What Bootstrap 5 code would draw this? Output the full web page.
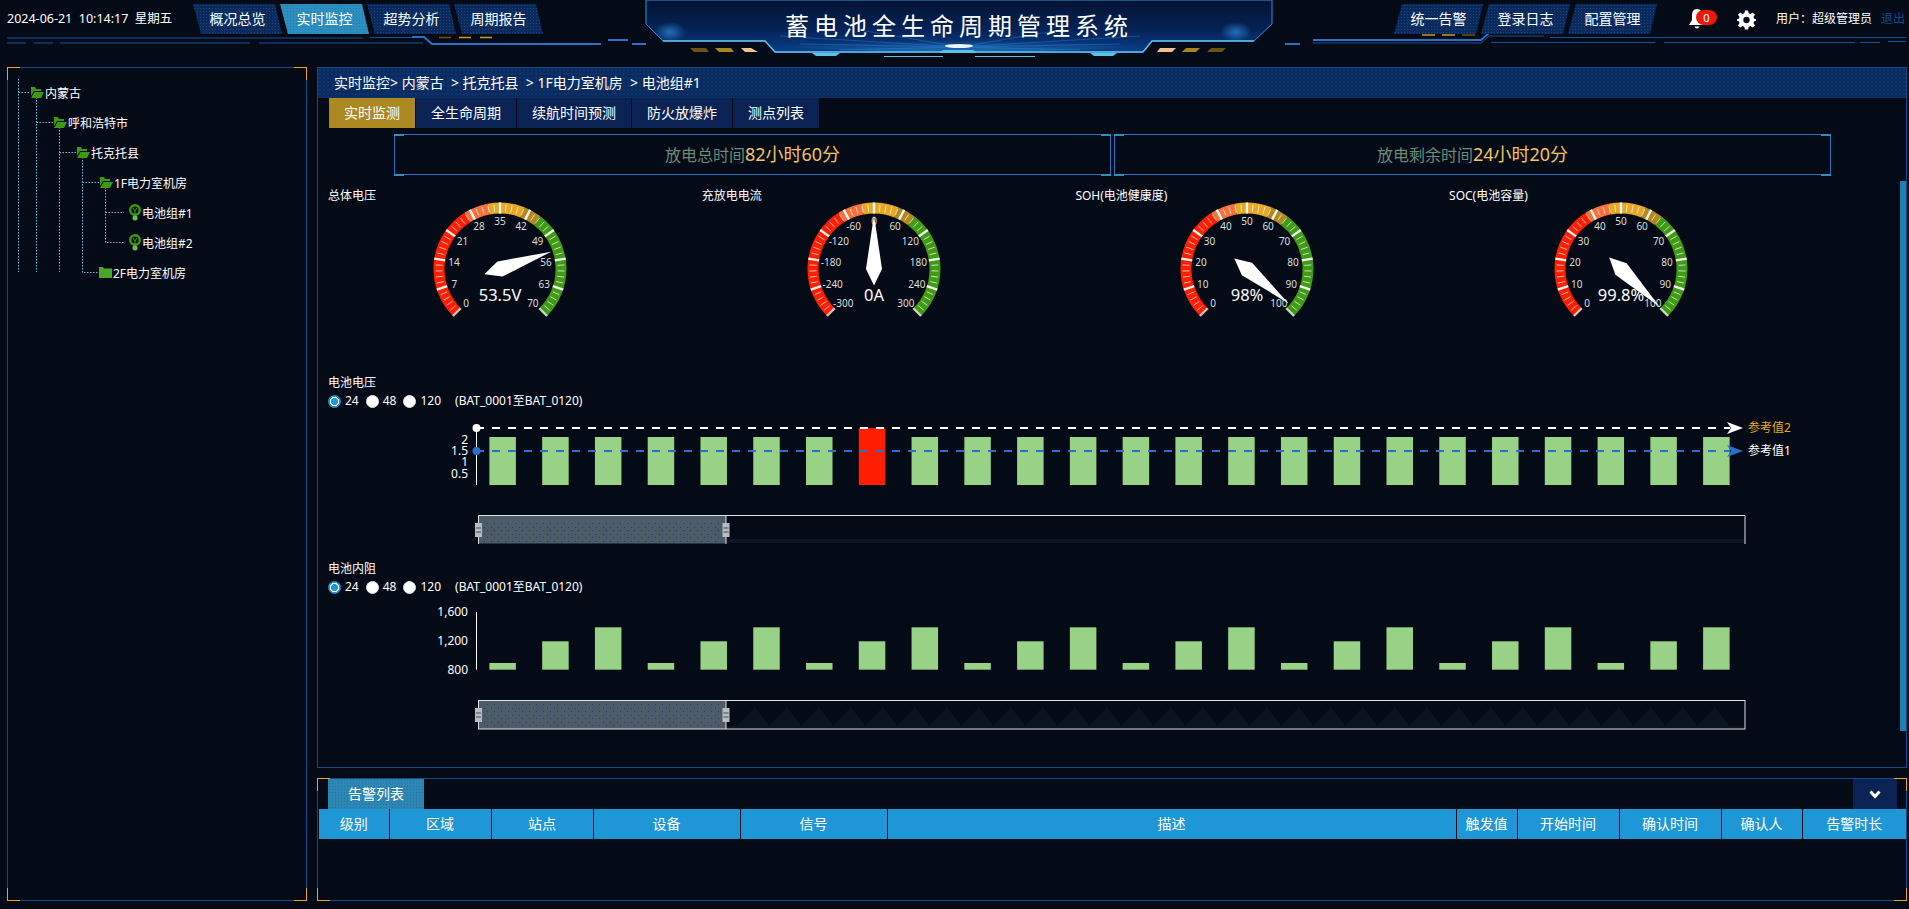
<!DOCTYPE html>
<html lang="zh-CN">
<head>
<meta charset="utf-8">
<title>蓄电池全生命周期管理系统</title>
<link rel="stylesheet" href="https://cdn.jsdelivr.net/npm/bootstrap@5.3.0/dist/css/bootstrap.min.css">
<style>
html,body{height:100%;overflow:hidden}
body{background:#040b16;color:#fff;font-family:"Noto Sans","Noto Sans CJK SC",sans-serif;font-size:12px;line-height:18px}
svg{display:block;overflow:visible}
.hdr{height:67px;position:relative}
.hdr-deco{position:absolute;left:0;top:0;z-index:0}
.hdr-left{flex:0 0 646px;padding:4px 0 0 7px;position:relative;z-index:1;align-items:flex-start}
.hdr-mid{flex:0 0 626px;position:relative;height:67px;z-index:1}
.hdr-right{flex:1 1 auto;position:relative;z-index:1;padding:4px 0 0 122px;align-items:flex-start}
.hdr-date{flex:0 0 186px;font-size:12.5px;line-height:30px;white-space:pre}
.title-art{position:absolute;left:0;top:0}
.title-txt{position:relative;text-align:center;font-size:24px;letter-spacing:5px;line-height:52px;height:52px;font-weight:400;margin:0}
.hdr-tab.nav-link{width:89px;height:30px;padding:0;line-height:30px;text-align:center;background:#0a2a5c radial-gradient(#1a4580 .6px,transparent .8px) 0 0/3px 3px;color:#fff;font-size:14px;margin-right:-2px}
.tab-l.nav-link{clip-path:polygon(0 0,calc(100% - 7px) 0,100% 100%,8px 100%)}
.tab-r.nav-link{clip-path:polygon(8px 0,100% 0,calc(100% - 7px) 100%,0 100%)}
.hdr-tab.nav-link.act{background:#2d8fbf radial-gradient(#247aa8 .6px,transparent .8px) 0 0/3px 3px}
.bell-wrap{position:relative;margin-left:33px;width:29px;height:30px}
.bell-ic{margin-top:2px}
.bell-count{position:absolute;left:8px;top:6px;width:21px;height:15px;border-radius:8px;background:#e8190f;text-align:center;font-size:11px;line-height:15px}
.gear-wrap{margin-left:20px;height:30px;padding-top:6px}
.user-txt{margin-left:20px;line-height:30px;font-size:12px;white-space:nowrap}
.logout{color:#0e4c86;margin-left:9px}
.body-row{height:834px;padding-left:7px;gap:10px}
.frame{position:relative;border:1px solid #0e4c86}
.frame::after{content:"";position:absolute;inset:-1px;pointer-events:none;background:
 linear-gradient(#e8a825,#e8a825) 0 0/13px 1px no-repeat,linear-gradient(#e8a825,#e8a825) 0 0/1px 13px no-repeat,
 linear-gradient(#e8a825,#e8a825) 100% 0/13px 1px no-repeat,linear-gradient(#e8a825,#e8a825) 100% 0/1px 13px no-repeat,
 linear-gradient(#e8a825,#e8a825) 0 100%/13px 1px no-repeat,linear-gradient(#e8a825,#e8a825) 0 100%/1px 13px no-repeat,
 linear-gradient(#e8a825,#e8a825) 100% 100%/13px 1px no-repeat,linear-gradient(#e8a825,#e8a825) 100% 100%/1px 13px no-repeat}
.side{flex:0 0 300px;padding-top:11px}
.tree-lines{position:absolute;left:0;top:0}
.tree-row{height:30px;display:flex;align-items:center;position:relative}
.t0{padding-left:22px}.t1{padding-left:45px}.t2{padding-left:68px}.t3{padding-left:91px}.t4{padding-left:121px}
.tree-ic{margin-bottom:4px;margin-right:1px;flex:none}
.right-col{flex:0 0 1590px;gap:10px}
.main-pane{height:701px;overflow:hidden}
.crumb{height:30px;background:#0a2b5f radial-gradient(#154080 .6px,transparent .8px) 0 0/4px 4px;padding-left:16px;line-height:29px;font-size:14px;white-space:pre}
.sub-tabs{padding-left:11px;gap:1px}
.sub-tab.nav-link{height:30px;padding:0;line-height:30px;text-align:center;background:#0a2354;color:#fff;font-size:14px}
.sub-tab.on.nav-link{background:#ab8820}
.w86{width:86px}.w100{width:100px}.w114{width:114px}.w99{width:100px}
.time-row{padding:6px 0 0 76px;gap:3px}
.time-box{position:relative;width:717px;height:41px;border:1px solid #2a6fb8;text-align:center;line-height:38px;font-size:16px;color:#6b8a78}
.time-box::after{content:"";position:absolute;inset:-2px -1px;pointer-events:none;background:
 linear-gradient(#2a8fbf,#2a8fbf) 0 1px/10px 2px no-repeat,linear-gradient(#2a8fbf,#2a8fbf) 0 100%/10px 2px no-repeat,
 linear-gradient(#2a8fbf,#2a8fbf) 100% 1px/10px 2px no-repeat,linear-gradient(#2a8fbf,#2a8fbf) 100% 100%/10px 2px no-repeat}
.time-val{font-size:18px;color:#f3c364}
.gauge-row{padding:12px 0 0 10px}
.gauge-cell{flex:0 0 373.7px}
.sec{padding-left:10px}
.sec-a{margin-top:54px}
.sec-b{margin-top:10px}
.radio-row{height:18px;padding-left:10px;white-space:pre}
.form-check-input.rd{width:13px;height:13px;margin:0 4px 0 0;border:1px solid #dfe7e4;background:#fff;flex:none}
.form-check-input.rd:checked{background:radial-gradient(circle,#1f96d6 0 3.5px,#fff 3.7px 4.6px,#1f96d6 4.8px);border-color:#1f96d6}
.rd-gap{margin-right:7px}
.bat-range{margin-left:14px}
.scroll-thumb{position:absolute;right:0;top:113px;width:6px;height:550px;background:#1f7fae}
.alarm-pane{height:123px}
.alarm-top{height:30px;padding-left:10px;padding-right:9px}
.alarm-tab{width:96px;height:30px;line-height:30px;text-align:center;font-size:14px;background:#2e86b5 radial-gradient(#27749f .6px,transparent .8px) 0 0/3px 3px}
.collapse-btn{width:44px;height:30px;padding:0;border:0;border-radius:0;background:#0a2354;display:flex;align-items:center;justify-content:center}
.alarm-table{table-layout:fixed;width:1587px;margin:0 0 0 1px;--bs-table-bg:transparent;--bs-table-color:#fff;font-size:14px}
.alarm-table th{height:30px;padding:0;background:#1f96d6;color:#fff;font-weight:400;text-align:center;vertical-align:middle;border:0;border-right:1px solid #040b16;line-height:30px;white-space:nowrap}
.alarm-table th:last-child{border-right:0}
.c70{width:70px}.c102{width:102px}.c147{width:147px}.c569{width:569px}.c61{width:61px}.c81{width:81px}.c104{width:104px}
</style>
</head>
<body>
<header class="hdr d-flex">
  <svg class="hdr-deco" width="1909" height="67" viewBox="0 0 1909 67" fill="none">
    <g stroke="#12509a" stroke-width="1">
      <path d="M7 38H363M370 37.5H424M7 43H26M34 43H53M60 43H250M259 43H423"/>
      <path d="M1489 36H1544M1550 37.5H1906M1491 42.5H1655M1664 42.5H1855M1860 42.5H1880M1888 41.5H1906M1313 43H1481L1489 36"/>
    </g>
    <path d="M412 37H424L432 44H601M608 40H628M632 44H646" stroke="#2a6fc8" stroke-width="2"/>
    <path d="M1285 44H1300M1313 40H1481L1489 33H1502" stroke="#2a6fc8" stroke-width="2"/>
    <path d="M439 37.500H451" stroke="#6b5316" stroke-width="1.500"/><path d="M459 37.500H471M480 37.500H492" stroke="#c9982a" stroke-width="1.500"/>
    <path d="M1422 35H1435M1442 35H1455" stroke="#c9982a" stroke-width="1.500"/><path d="M1462 35H1475" stroke="#6b5316" stroke-width="1.500"/>
  </svg>
  <div class="hdr-left d-flex">
    <div class="hdr-date">2024-06-21  10:14:17  星期五</div>
    <nav class="nav">
      <a class="nav-link hdr-tab tab-l" href="#">概况总览</a>
      <a class="nav-link hdr-tab tab-l act" href="#">实时监控</a>
      <a class="nav-link hdr-tab tab-l" href="#">超势分析</a>
      <a class="nav-link hdr-tab tab-l" href="#">周期报告</a>
    </nav>
  </div>
  <div class="hdr-mid">
    <svg class="title-art" width="626" height="67" viewBox="646 0 626 67" fill="none">
      <defs>
        <linearGradient id="tg" x1="0" y1="0" x2="0" y2="1"><stop offset="0" stop-color="#031330"/><stop offset=".6" stop-color="#05245a"/><stop offset="1" stop-color="#0a3f88"/></linearGradient>
        <radialGradient id="cg" cx=".5" cy="1" r=".5"><stop offset="0" stop-color="#3aa0e8" stop-opacity=".5"/><stop offset="1" stop-color="#3aa0e8" stop-opacity="0"/></radialGradient>
        <radialGradient id="sg"><stop offset="0" stop-color="#2f8fdc" stop-opacity=".7"/><stop offset="1" stop-color="#2f8fdc" stop-opacity="0"/></radialGradient>
      </defs>
      <path d="M646 0V24L663 41H765L775 52H1143L1152 41H1254L1272 24V0Z" fill="url(#tg)" stroke="#2f8fdc"/>
      <g stroke="#1f6fc0" stroke-opacity=".55">
        <path d="M960 47L780 36M960 47L800 44M960 47L840 50M960 47L1140 36M960 47L1120 44M960 47L1080 50M960 47L860 30M960 47L1060 30"/>
      </g>
      <ellipse cx="960" cy="40" rx="210" ry="12" fill="url(#cg)"/>
      <ellipse cx="670" cy="32" rx="16" ry="10" fill="url(#sg)"/><ellipse cx="1236" cy="32" rx="16" ry="10" fill="url(#sg)"/>
      <ellipse cx="959" cy="46" rx="14" ry="2" fill="#eaf8ff"/>
      <path d="M663 41H765L775 52H1143L1152 41H1254" stroke="#5fc0ea" stroke-width="1.500"/>
      <path d="M690 48H706L709 52H694Z" fill="#6b5316"/><path d="M715 48H731L734 52H719Z" fill="#a8851f"/><path d="M741 48H751L758 52H745Z" fill="#f2c08f"/>
      <path d="M1176 48H1160L1157 52H1172Z" fill="#f2c08f"/><path d="M1200 48H1186L1182 52H1196Z" fill="#a8851f"/><path d="M1226 48H1211L1207 52H1222Z" fill="#6b5316"/>
      <path d="M812 53H840L836 56H816Z" fill="#5fc0ea"/><path d="M943 50H973L977 53H939Z" fill="#5fc0ea"/><path d="M1090 53H1117L1113 56H1094Z" fill="#5fc0ea"/>
      <path d="M884 56.500H943M975 56.500H1035" stroke="#5fc0ea"/>
    </svg>
    <h1 class="title-txt">蓄电池全生命周期管理系统</h1>
  </div>
  <div class="hdr-right d-flex">
    <nav class="nav">
      <a class="nav-link hdr-tab tab-r" href="#">统一告警</a>
      <a class="nav-link hdr-tab tab-r" href="#">登录日志</a>
      <a class="nav-link hdr-tab tab-r" href="#">配置管理</a>
    </nav>
    <div class="bell-wrap">
      <svg class="bell-ic" width="18" height="24" viewBox="0 0 18 24"><path fill="#fff" d="M9 3C5.500 3 4 6 4 9v5l-3 5h16l-3-5V9c0-3-1.500-6-5-6zM6.500 20.500a2.600 2.600 0 0 0 5 0z"/></svg>
      <span class="bell-count">0</span>
    </div>
    <div class="gear-wrap">
      <svg width="19" height="20" viewBox="0 0 24 24"><path fill="#fff" fill-rule="evenodd" d="M10 0h4l.7 3.400 2.300 1 2.900-1.900 2.800 2.800L20.800 8.200l1 2.300L24 11v2l-2.200.6-1 2.300 1.900 2.900-2.800 2.800-2.900-1.900-2.300 1L14 24h-4l-.7-3.300-2.300-1-2.900 1.900-2.800-2.800 1.900-2.900-1-2.300L0 13v-2l2.200-.5 1-2.300L1.300 5.300l2.800-2.800L7 4.400l2.300-1zM12 8a4 4 0 1 0 0 8 4 4 0 0 0 0-8z"/></svg>
    </div>
    <div class="user-txt">用户：超级管理员<span class="logout">退出</span></div>
  </div>
</header>

<div class="body-row d-flex">
  <aside class="side frame">
    <svg class="tree-lines" width="298" height="300" viewBox="8 68 298 300" fill="none" stroke="#5fc3ea" stroke-dasharray="1.500 1.500">
      <path d="M18.500 79V272M18.500 92.500H30M36.500 97V272M36.500 122.500H53M59.500 127V272M59.500 152.500H76M82.500 157V272.500H99M82.500 182.500H99M105.500 187V242.500H124M105.500 212.500H124"/>
    </svg>
    <div class="tree-row t0"><svg class="tree-ic" width="14" height="11" viewBox="0 0 14 11"><path fill="#3a9a12" d="M1 0h4l1 2h5v2H4L1 9zM4.500 5H14l-3 6H1z"/></svg>内蒙古</div>
    <div class="tree-row t1"><svg class="tree-ic" width="14" height="11" viewBox="0 0 14 11"><path fill="#3a9a12" d="M1 0h4l1 2h5v2H4L1 9zM4.500 5H14l-3 6H1z"/></svg>呼和浩特市</div>
    <div class="tree-row t2"><svg class="tree-ic" width="14" height="11" viewBox="0 0 14 11"><path fill="#3a9a12" d="M1 0h4l1 2h5v2H4L1 9zM4.500 5H14l-3 6H1z"/></svg>托克托县</div>
    <div class="tree-row t3"><svg class="tree-ic" width="14" height="11" viewBox="0 0 14 11"><path fill="#3a9a12" d="M1 0h4l1 2h5v2H4L1 9zM4.500 5H14l-3 6H1z"/></svg>1F电力室机房</div>
    <div class="tree-row t4"><svg class="tree-ic" width="12" height="17" viewBox="0 0 12 17"><circle cx="6" cy="6" r="4.800" fill="#06120c" stroke="#3a9a12" stroke-width="2.400"/><path d="M4 4l2 3 2-3M6 7v4" stroke="#3a9a12" fill="none"/><rect x="3.500" y="11.500" width="5" height="5" rx="2" fill="#6fb85a"/></svg>电池组#1</div>
    <div class="tree-row t4"><svg class="tree-ic" width="12" height="17" viewBox="0 0 12 17"><circle cx="6" cy="6" r="4.800" fill="#06120c" stroke="#3a9a12" stroke-width="2.400"/><path d="M4 4l2 3 2-3M6 7v4" stroke="#3a9a12" fill="none"/><rect x="3.500" y="11.500" width="5" height="5" rx="2" fill="#6fb85a"/></svg>电池组#2</div>
    <div class="tree-row t3"><svg class="tree-ic" width="13" height="11" viewBox="0 0 13 11"><path fill="#4aa528" d="M0 0h4l1 1.500h8V11H0z"/></svg>2F电力室机房</div>
  </aside>

  <div class="right-col d-flex flex-column">
    <main class="main-pane frame">
      <div class="crumb">实时监控&gt; 内蒙古  &gt; 托克托县  &gt; 1F电力室机房  &gt; 电池组#1</div>
      <nav class="nav sub-tabs">
        <a class="nav-link sub-tab on w86" href="#">实时监测</a>
        <a class="nav-link sub-tab w100" href="#">全生命周期</a>
        <a class="nav-link sub-tab w114" href="#">续航时间预测</a>
        <a class="nav-link sub-tab w99" href="#">防火放爆炸</a>
        <a class="nav-link sub-tab w86" href="#">测点列表</a>
      </nav>
      <div class="time-row d-flex">
        <div class="time-box">放电总时间<span class="time-val">82小时60分</span></div>
        <div class="time-box">放电剩余时间<span class="time-val">24小时20分</span></div>
      </div>
      <div class="gauge-row d-flex">
        <div class="gauge-cell"><div>总体电压</div><svg class="gauge" width="342" height="115" data-min="0" data-max="70" data-val="53.5" data-txt="53.5V"></svg></div>
        <div class="gauge-cell"><div>充放电电流</div><svg class="gauge" width="342" height="115" data-min="-300" data-max="300" data-val="0" data-txt="0A"></svg></div>
        <div class="gauge-cell"><div>SOH(电池健康度)</div><svg class="gauge" width="342" height="115" data-min="0" data-max="100" data-val="98" data-txt="98%"></svg></div>
        <div class="gauge-cell"><div>SOC(电池容量)</div><svg class="gauge" width="342" height="115" data-min="0" data-max="100" data-val="99.8" data-txt="99.8%"></svg></div>
      </div>

      <div class="sec sec-a">电池电压</div>
      <div class="radio-row d-flex align-items-center">
        <input class="form-check-input rd" type="radio" name="ra" checked><span class="rd-gap">24</span>
        <input class="form-check-input rd" type="radio" name="ra"><span class="rd-gap">48</span>
        <input class="form-check-input rd" type="radio" name="ra"><span>120</span>
        <span class="bat-range">(BAT_0001至BAT_0120)</span>
      </div>
      <svg id="chartA" class="ms-2" width="1560" height="140" viewBox="326 410 1560 140" font-size="12" fill="#fff"></svg>

      <div class="sec sec-b">电池内阻</div>
      <div class="radio-row d-flex align-items-center">
        <input class="form-check-input rd" type="radio" name="rb" checked><span class="rd-gap">24</span>
        <input class="form-check-input rd" type="radio" name="rb"><span class="rd-gap">48</span>
        <input class="form-check-input rd" type="radio" name="rb"><span>120</span>
        <span class="bat-range">(BAT_0001至BAT_0120)</span>
      </div>
      <svg id="chartB" class="ms-2" width="1560" height="139" viewBox="326 597 1560 139" font-size="12" fill="#fff"></svg>
      <div class="scroll-thumb"></div>
    </main>

    <section class="alarm-pane frame">
      <div class="alarm-top d-flex justify-content-between">
        <div class="alarm-tab">告警列表</div>
        <button class="btn collapse-btn" type="button" aria-label="收起"><svg width="12" height="9" viewBox="0 0 12 9"><path d="M1.500 1.500L6 6.500l4.500-5" fill="none" stroke="#fff" stroke-width="3"/></svg></button>
      </div>
      <table class="table alarm-table">
        <thead><tr>
          <th class="c70">级别</th><th class="c102">区域</th><th class="c102">站点</th><th class="c147">设备</th><th class="c147">信号</th><th class="c569">描述</th><th class="c61">触发值</th><th class="c102">开始时间</th><th class="c102">确认时间</th><th class="c81">确认人</th><th class="c104">告警时长</th>
        </tr></thead>
      </table>
    </section>
  </div>
</div>

<script src="https://cdn.jsdelivr.net/npm/bootstrap@5.3.0/dist/js/bootstrap.bundle.min.js"></script>
<script>
(function(){
function pt(r,t){var a=(225-270*t)*Math.PI/180;return [r*Math.cos(a),-r*Math.sin(a)];}
function f(n){return n.toFixed(2);}
document.querySelectorAll('.gauge').forEach(function(s){
  var min=+s.dataset.min,max=+s.dataset.max,val=+s.dataset.val,h='';
  s.setAttribute('viewBox','-172 -64 342 115');
  var stops=[[0,.38,'#ff1e00'],[.38,.46,'#f9703c'],[.46,.58,'#e8a825'],[.58,.64,'#b08a20'],[.64,1,'#3f9a14']];
  stops.forEach(function(c){
    var p=pt(61,c[0]),q=pt(61,c[1]),lg=(c[1]-c[0])*270>180?1:0;
    h+='<path d="M'+f(p[0])+' '+f(p[1])+'A61 61 0 '+lg+' 1 '+f(q[0])+' '+f(q[1])+'" fill="none" stroke="'+c[2]+'" stroke-width="11"/>';
  });
  for(var i=0;i<=50;i++){
    var t=i/50,maj=i%5==0;
    var a=pt(maj?55.5:57.5,t),b=pt(maj?66.5:64.5,t);
    var op=maj?(i%50==0?.75:.95):.72,w=maj?2.4:1;
    h+='<line x1="'+f(a[0])+'" y1="'+f(a[1])+'" x2="'+f(b[0])+'" y2="'+f(b[1])+'" stroke="#fff" stroke-opacity="'+op+'" stroke-width="'+w+'"/>';
  }
  for(var k=0;k<=10;k++){
    var tt=k/10,v=min+(max-min)*tt,l=String(Math.round(v)),p=pt(48,tt);
    var dx=-Math.cos((225-270*tt)*Math.PI/180)*(l.length-1)*1.5;
    h+='<text x="'+f(p[0]+dx)+'" y="'+f(p[1])+'" text-anchor="middle" dominant-baseline="central" font-size="10" fill="#ddd">'+l+'</text>';
  }
  var rot=(val-min)/(max-min)*270-135;
  h+='<polygon points="0,-54 8,0 0,16.500 -8,0" fill="#fff" transform="rotate('+rot+')"/>';
  h+='<text x="0" y="25" text-anchor="middle" dominant-baseline="central" font-size="16.5" fill="#fff">'+s.dataset.txt+'</text>';
  s.innerHTML=h;
});
function handle(x,y){
  return '<rect x="'+(x-3.5)+'" y="'+(y-7)+'" width="7" height="14" fill="#b5bcc4"/><path d="M'+(x-2.5)+' '+(y-2)+'h5M'+(x-2.5)+' '+(y+2)+'h5" stroke="#40484f"/>';
}
function dots(id){
  return '<defs><pattern id="'+id+'" width="7" height="7" patternUnits="userSpaceOnUse"><rect x="1" y="2" width="1" height="1" fill="#1c3f78"/><rect x="4" y="5" width="1" height="1" fill="#1c3f78"/></pattern></defs>';
}
var X0=489.4,STEP=52.77,BW=26.5,h=dots('da');
/* chart A */
h+='<rect x="726" y="539" width="1019" height="4" fill="#0e1624"/>';
for(var i=0;i<24;i++){
  var red=i==7,yTop=red?428:437,x=X0+STEP*i;
  h+='<rect x="'+x+'" y="'+yTop+'" width="'+BW+'" height="'+(485-yTop)+'" fill="'+(red?'#ff1e00':'#98d286')+'"/>';
}
h+='<line x1="476.5" y1="428" x2="476.5" y2="485" stroke="#fff"/>';
[['2',439],['1.5',450],['1',461],['0.5',473]].forEach(function(l){h+='<text x="468" y="'+l[1]+'" text-anchor="end" dominant-baseline="central">'+l[0]+'</text>';});
h+='<line x1="476" y1="428" x2="1730" y2="428" stroke="#fff" stroke-width="2" stroke-dasharray="8 8"/>';
h+='<line x1="476" y1="451" x2="1730" y2="451" stroke="#2a6fc8" stroke-width="2" stroke-dasharray="8 8"/>';
h+='<circle cx="476.5" cy="428" r="4" fill="#fff"/><circle cx="476.5" cy="451" r="4" fill="#2a6fc8"/>';
h+='<polygon points="1743,428 1727,422 1731,428 1727,434" fill="#fff"/><polygon points="1743,451 1727,445 1731,451 1727,457" fill="#2a6fc8"/>';
h+='<text x="1748" y="427" fill="#e8a825" dominant-baseline="central">参考值2</text><text x="1748" y="450" dominant-baseline="central">参考值1</text>';
h+='<rect x="478.500" y="515.500" width="247.500" height="28" fill="#4d5a68"/><rect x="482" y="521" width="240" height="22" fill="url(#da)"/>';
h+='<path d="M478.500 544V515.500H1745V544M726 515.500V544" fill="none" stroke="#dfe3e6"/>';
h+=handle(478.5,530)+handle(726,530);
document.getElementById('chartA').innerHTML=h;
/* chart B */
h=dots('db');
var m='M726 729V727';for(var pk=755;pk<1720;pk+=32){m+='L'+(pk-18)+' 727L'+pk+' 708L'+(pk+14)+' 727';}
h+='<path d="'+m+'L1744 727V729Z" fill="#0b1420"/>';
var tops=[664,642.3,628.3];
for(var j=0;j<24;j++){
  var tp=tops[j%3],xb=X0+STEP*j;
  h+='<rect x="'+xb+'" y="'+tp+'" width="'+BW+'" height="'+(670.7-tp)+'" fill="#98d286"/>';
}
h+='<line x1="476.5" y1="613" x2="476.5" y2="670.700" stroke="#fff"/>';
[['1,600',612.7],['1,200',641.7],['800',670]].forEach(function(l){h+='<text x="468" y="'+l[1]+'" text-anchor="end" dominant-baseline="central">'+l[0]+'</text>';});
h+='<rect x="478.500" y="701.500" width="247.500" height="28.500" fill="#4d5a68"/><rect x="482" y="705" width="240" height="24" fill="url(#db)"/>';
h+='<rect x="478.500" y="701.500" width="1266.500" height="28.500" fill="none" stroke="#dfe3e6"/><path d="M726 701.500V730" stroke="#dfe3e6"/>';
h+=handle(478.5,716)+handle(726,716);
document.getElementById('chartB').innerHTML=h;
})();
</script>
</body>
</html>
